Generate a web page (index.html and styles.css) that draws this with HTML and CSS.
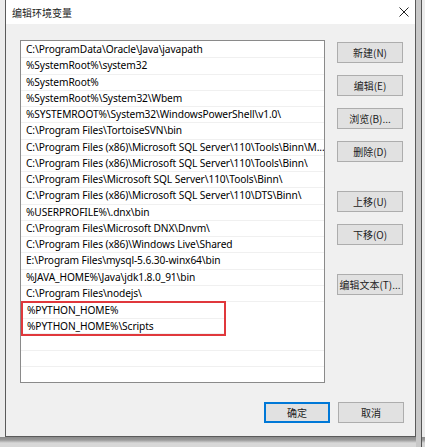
FILE: index.html
```html
<!DOCTYPE html>
<html lang="zh-CN">
<head>
<meta charset="utf-8">
<title>编辑环境变量</title>
<link rel="stylesheet" href="styles.css">
</head>
<body>
<div class="desk">
  <div class="window">
    <div class="titlebar">
      <span class="title">编辑环境变量</span>
      <svg class="close" width="10" height="10" viewBox="0 0 10 10"><path d="M0.5 0.5 L9.5 9.5 M9.5 0.5 L0.5 9.5" stroke="#222" stroke-width="1" fill="none"/></svg>
    </div>
    <div class="content">
      <div class="main">
        <div class="list">
          <div class="row">C:\ProgramData\Oracle\Java\javapath</div>
          <div class="row">%SystemRoot%\system32</div>
          <div class="row">%SystemRoot%</div>
          <div class="row">%SystemRoot%\System32\Wbem</div>
          <div class="row">%SYSTEMROOT%\System32\WindowsPowerShell\v1.0\</div>
          <div class="row">C:\Program Files\TortoiseSVN\bin</div>
          <div class="row">C:\Program Files (x86)\Microsoft SQL Server\110\Tools\Binn\M...</div>
          <div class="row">C:\Program Files (x86)\Microsoft SQL Server\110\Tools\Binn\</div>
          <div class="row">C:\Program Files\Microsoft SQL Server\110\Tools\Binn\</div>
          <div class="row">C:\Program Files (x86)\Microsoft SQL Server\110\DTS\Binn\</div>
          <div class="row">%USERPROFILE%\.dnx\bin</div>
          <div class="row">C:\Program Files\Microsoft DNX\Dnvm\</div>
          <div class="row">C:\Program Files (x86)\Windows Live\Shared</div>
          <div class="row">E:\Program Files\mysql-5.6.30-winx64\bin</div>
          <div class="row">%JAVA_HOME%\Java\jdk1.8.0_91\bin</div>
          <div class="row">C:\Program Files\nodejs\</div>
          <div class="highlight">
            <div class="row">%PYTHON_HOME%</div>
            <div class="row">%PYTHON_HOME%\Scripts</div>
          </div>
          <div class="row"></div>
          <div class="row"></div>
          <div class="row"></div>
        </div>
        <div class="side">
          <button class="btn b1">新建(N)</button>
          <button class="btn b2">编辑(E)</button>
          <button class="btn b2">浏览(B)...</button>
          <button class="btn b2">删除(D)</button>
          <button class="btn b3">上移(U)</button>
          <button class="btn b2">下移(O)</button>
          <button class="btn b3">编辑文本(T)...</button>
        </div>
      </div>
      <div class="footer">
        <button class="btn primary">确定</button>
        <button class="btn">取消</button>
      </div>
    </div>
  </div>
  <div class="behind"></div>
</div>
</body>
</html>
```
FILE: styles.css
```css
* { box-sizing: border-box; }
html, body { margin: 0; padding: 0; }
body {
  width: 425px;
  height: 447px;
  overflow: hidden;
  background: #ececec;
  font-family: "Segoe UI", "Noto Sans", "Noto Sans CJK SC", sans-serif;
  font-size: 10.2px;
  color: #000;
}
.desk {
  display: flex;
  padding-left: 5px;
  height: 447px;
  background: linear-gradient(#ececec 437px, #8a8a8a 437px, #9a9a9a 440px, #d8d8d8 443px);
}
.window {
  width: 411px;
  height: 437px;
  border: 1px solid #5a5a5a;
  border-top: none;
  background: #f0f0f0;
  display: flex;
  flex-direction: column;
  flex-shrink: 0;
}
.behind {
  flex: 1;
  background: #c8c8c8;
  border-right: 1px solid #555;
  margin-right: 3px;
}
.titlebar {
  height: 24px;
  background: #fff;
  display: flex;
  align-items: center;
  justify-content: space-between;
  padding: 0 6px 0 6px;
}
.title {
  font-family: "Noto Sans CJK SC", sans-serif;
  font-size: 10px;
  color: #222;
}
.close { display: block; }
.content {
  flex: 1;
  display: flex;
  flex-direction: column;
  padding: 16px 11px 0 14px;
}
.main {
  display: flex;
  gap: 12px;
}
.list {
  width: 305px;
  height: 343px;
  border: 1px solid #8a8a8a;
  background: #fff;
  padding-top: 1px;
  overflow: hidden;
}
.row {
  height: 16.28px;
  border-bottom: 1px solid #f0f0f0;
  padding-left: 5px;
  line-height: 15.5px;
  letter-spacing: -0.1px;
  white-space: nowrap;
  overflow: hidden;
}
.highlight {
  width: 205px;
  border: 2px solid #e0383c;
  margin: -1px 0 -1px 0;
}
.highlight .row { padding-left: 4px; height: 15.28px; }
.side {
  display: flex;
  flex-direction: column;
  padding-top: 2px;
}
.btn {
  width: 66px;
  height: 21px;
  background: #e1e1e1;
  border: 1px solid #adadad;
  font-family: "Noto Sans CJK SC", sans-serif;
  font-size: 10px;
  color: #222;
  padding: 0;
  line-height: 19px;
}
.b2 { margin-top: 12px; }
.b3 { margin-top: 29px; }
.footer {
  display: flex;
  justify-content: flex-end;
  gap: 8px;
  padding-top: 19px;
}
.primary {
  border: 1px solid #0078d7;
  box-shadow: inset 0 0 0 1px #0078d7;
}
```
